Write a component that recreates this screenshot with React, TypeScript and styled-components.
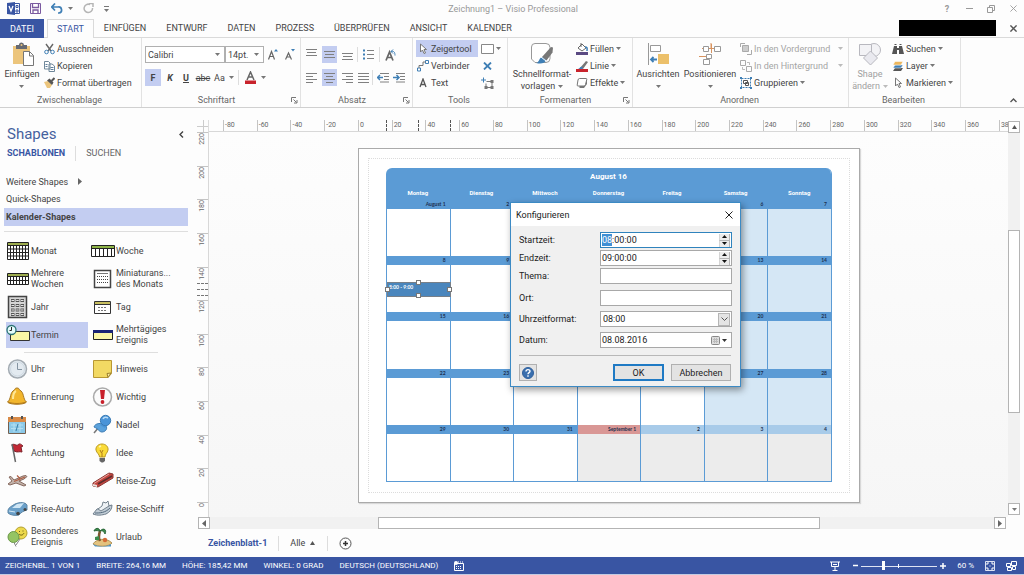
import React, { useEffect, useRef } from "react";
import styled, { createGlobalStyle, css } from "styled-components";

const font = `Roboto, "Open Sans", "Liberation Sans", sans-serif`;
const smallFont = `Lato, "Open Sans", sans-serif`;
const ink = "#444444";
const brand = "#3955a3";
const soft = "#c3cdf1";
const steel = "#3f7fb5";
const calBlue = "#5b9bd5";

const GlobalStyle = createGlobalStyle`
  * { box-sizing: border-box; }
  body { margin: 0; background: #fdfdfd; }
  html, body, #root { height: 100%; }
  button, input, select { font: inherit; color: inherit; margin: 0; }
  svg { display: block; flex: none; }
`;

const Shell = styled.div`
  display: flex;
  flex-direction: column;
  min-height: 100%;
  font-family: ${font};
  font-size: 9px;
  line-height: 12px;
  color: ${ink};
  background: #fdfdfd;
`;

const plainButton = css`
  display: flex;
  align-items: center;
  border: 0;
  padding: 0;
  background: none;
  white-space: nowrap;
`;

/* ---------- title bar ---------- */
const TitleBar = styled.header`
  display: grid;
  grid-template-columns: 1fr auto 1fr;
  align-items: center;
  height: 19px;
  padding: 0 5px 2px 7px;
`;
const QuickAccess = styled.div`
  display: flex;
  align-items: center;
  gap: 10px;
`;
const QuickButton = styled.button`
  ${plainButton}
  gap: 5px;
`;
const WindowTitle = styled.h1`
  margin: 0;
  font-size: 9px;
  font-weight: 400;
  color: #999999;
`;
const WindowControls = styled.div`
  display: flex;
  justify-content: flex-end;
  align-items: center;
  gap: 10px;
  color: #999999;
`;
const WindowButton = styled.button`
  ${plainButton}
  justify-content: center;
  width: 12px;
  height: 12px;
  font-weight: 700;
`;

/* ---------- tabs ---------- */
const TabBar = styled.nav`
  display: flex;
  align-items: stretch;
  height: 19px;
  border-bottom: 1px solid #dadada;
`;
const FileTab = styled.button`
  ${plainButton}
  justify-content: center;
  width: 44px;
  background: ${brand};
  color: #ffffff;
  margin: 0 3px -1px 0;
`;
const Tab = styled.button<{ $active?: boolean }>`
  ${plainButton}
  padding: 0 10px;
  ${(p) =>
    p.$active &&
    css`
      padding: 0 9px;
      color: ${brand};
      background: #fdfdfd;
      border: 1px solid #dadada;
      border-bottom: 0;
      margin-bottom: -1px;
    `}
`;
const AccountBar = styled.div`
  display: flex;
  align-items: center;
  gap: 11px;
  margin-left: auto;
  padding-right: 5px;
`;
const AccountName = styled.div`
  width: 97px;
  height: 16px;
  background: #000000;
`;

/* ---------- ribbon ---------- */
const Ribbon = styled.section`
  display: flex;
  height: 70px;
  border-bottom: 1px solid #d0d0d0;
`;
const Group = styled.div<{ $w: number }>`
  display: flex;
  flex-direction: column;
  flex: none;
  width: ${(p) => p.$w}px;
  padding-top: 2px;
  border-right: 1px solid #e2e2e2;
`;
const GroupBody = styled.div<{ $pad?: number; $gap?: number }>`
  display: flex;
  flex: 1;
  gap: ${(p) => p.$gap ?? 4}px;
  padding-left: ${(p) => p.$pad ?? 4}px;
`;
const GroupFooter = styled.div`
  display: flex;
  align-items: center;
  height: 14px;
  padding-right: 2px;
  color: #666666;
`;
const Launcher = styled.button`
  ${plainButton}
`;
const FooterText = styled.span`
  flex: 1;
  text-align: center;
`;
const BigButton = styled.button<{ $w: number; $muted?: boolean }>`
  ${plainButton}
  flex-direction: column;
  width: ${(p) => p.$w}px;
  padding-top: 2px;
  color: ${(p) => (p.$muted ? "#a0a0a0" : ink)};
`;
const BigLabel = styled.span`
  display: flex;
  flex-direction: column;
  align-items: center;
  padding-top: 2px;
`;
const LabelLine = styled.span`
  display: flex;
  align-items: center;
  justify-content: center;
  gap: 3px;
  height: 12px;
`;
const Stack = styled.div`
  display: flex;
  flex-direction: column;
  align-items: flex-start;
`;
const Tool = styled.button<{ $muted?: boolean; $on?: boolean; $w?: number }>`
  ${plainButton}
  gap: 2px;
  height: 17px;
  padding-left: 1px;
  width: ${(p) => (p.$w ? `${p.$w}px` : "auto")};
  color: ${(p) => (p.$muted ? "#a5a5a5" : ink)};
  background: ${(p) => (p.$on ? soft : "none")};
`;
const ToolArrow = styled.span`
  display: flex;
  margin-left: auto;
`;
const Rows = styled.div`
  display: flex;
  flex-direction: column;
  gap: 6px;
  padding-top: 6px;
`;
const Row = styled.div`
  display: flex;
  align-items: center;
  height: 17px;
  gap: 3px;
`;
const Glyph = styled.button<{ $on?: boolean; $w?: number }>`
  ${plainButton}
  justify-content: center;
  gap: 4px;
  width: ${(p) => p.$w ?? 15}px;
  height: 17px;
  background: ${(p) => (p.$on ? soft : "none")};
`;
const Rule = styled.span`
  width: 1px;
  height: 15px;
  background: #dddddd;
`;
const Picker = styled.label<{ $w: number }>`
  position: relative;
  display: block;
  width: ${(p) => p.$w}px;
  height: 17px;
  margin-right: -3px;
  & > svg {
    position: absolute;
    right: 5px;
    top: 7px;
    pointer-events: none;
  }
`;
const PickerField = styled.select`
  appearance: none;
  width: 100%;
  height: 100%;
  padding: 0 2px;
  border: 1px solid #b0b0b0;
  border-radius: 0;
  background: #ffffff;
`;
const RibbonEnd = styled.div`
  display: flex;
  flex: 1;
  align-items: flex-end;
  justify-content: flex-end;
  padding: 0 7px 4px 0;
`;

/* ---------- shapes panel ---------- */
const Main = styled.div`
  display: flex;
  flex: 1;
  min-height: 0;
`;
const Sidebar = styled.aside`
  flex: none;
  width: 197px;
  padding: 15px 9px 0 4px;
`;
const SidebarHead = styled.div`
  display: flex;
  justify-content: space-between;
  align-items: center;
  height: 22px;
  padding: 0 4px 0 3px;
`;
const SidebarTitle = styled.h2`
  margin: 0;
  font-size: 15px;
  line-height: 20px;
  font-weight: 400;
  color: #45619d;
`;
const SidebarTabs = styled.div`
  display: flex;
  align-items: center;
  height: 16px;
  padding-left: 3px;
  gap: 10px;
`;
const SidebarTab = styled.button<{ $on?: boolean }>`
  ${plainButton}
  font-weight: ${(p) => (p.$on ? 700 : 400)};
  color: ${(p) => (p.$on ? brand : "#666666")};
`;
const Stencils = styled.div`
  display: flex;
  flex-direction: column;
  padding-top: 12px;
`;
const Stencil = styled.button<{ $on?: boolean }>`
  ${plainButton}
  gap: 10px;
  height: ${(p) => (p.$on ? 18 : 17)}px;
  margin-top: ${(p) => (p.$on ? 1 : 0)}px;
  padding-left: 2px;
  font-weight: ${(p) => (p.$on ? 700 : 400)};
  background: ${(p) => (p.$on ? soft : "none")};
`;
const Divider = styled.hr<{ $inset?: boolean }>`
  width: ${(p) => (p.$inset ? "134px" : "100%")};
  height: 1px;
  margin: ${(p) => (p.$inset ? "3px 0 2px 20px" : "5px 0")};
  border: 0;
  background: #dedede;
`;
const ShapeGrid = styled.div`
  display: grid;
  grid-template-columns: 85px 90px;
  grid-auto-rows: 28px;
  padding-left: 2px;
`;
const ShapeItem = styled.button<{ $on?: boolean }>`
  ${plainButton}
  gap: 1px;
  margin: 1px 3px 1px 0;
  line-height: 11px;
  text-align: left;
  white-space: pre-line;
  background: ${(p) => (p.$on ? soft : "none")};
`;

/* ---------- drawing area ---------- */
const Workspace = styled.main`
  display: grid;
  flex: 1;
  min-width: 0;
  grid-template-columns: 12px 1fr 12px;
  grid-template-rows: 12px 1fr 12px 28px;
  padding: 12px 4px 0 0;
`;
const Corner = styled.div`
  background:
    linear-gradient(#cccccc, #cccccc) 6px 0 / 1px 12px no-repeat,
    linear-gradient(#cccccc, #cccccc) 0 6px / 12px 1px no-repeat;
  border-right: 1px solid #dddddd;
`;
const HRuler = styled.div`
  position: relative;
  display: flex;
  min-width: 0;
  overflow: hidden;
  padding-left: 14px;
  border-bottom: 1px solid #d8d8d8;
  color: #666666;
  font-size: 7px;
  line-height: 10px;
`;
const HTick = styled.span<{ $last?: boolean }>`
  flex: ${(p) => (p.$last ? "0 0 9px" : "1 1 0")};
  padding-left: 1px;
  border-left: 1px solid #c4c4c4;
  min-width: 0;
  white-space: nowrap;
`;
const VRuler = styled.div`
  position: relative;
  display: flex;
  flex-direction: column;
  border-right: 1px solid #d8d8d8;
  color: #666666;
  font-size: 7px;
  line-height: 10px;
`;
const VTick = styled.span<{ $last?: boolean }>`
  flex: ${(p) => (p.$last ? "0 0 15px" : "1 1 0")};
  display: flex;
  align-items: flex-start;
  border-top: 1px solid #c4c4c4;
`;
const VTickLabel = styled.span`
  writing-mode: vertical-rl;
  transform: rotate(180deg);
`;
const HMark = styled.i<{ $at: number }>`
  position: absolute;
  top: 0;
  bottom: 0;
  left: ${(p) => p.$at}px;
  border-left: 1px dashed #555555;
`;
const VMark = styled.i<{ $at: number }>`
  position: absolute;
  left: 0;
  right: 0;
  top: ${(p) => p.$at}px;
  border-top: 1px dashed #777777;
`;
const Canvas = styled.div`
  position: relative;
  overflow: hidden;
  background: linear-gradient(#fdfdfd, #f6f6f6);
`;
const Page = styled.div`
  position: absolute;
  left: 149px;
  top: 16px;
  width: 502px;
  height: 355px;
  padding: 9px;
  background: #ffffff;
  border: 1px solid #aaaaaa;
  box-shadow: 1px 1px 1px #d8d8d8;
`;
const Margins = styled.div`
  height: 100%;
  padding: 9px 17px;
  border: 1px dotted #dcdcdc;
`;
const Calendar = styled.div`
  position: relative;
`;
const CalendarTable = styled.table`
  width: 100%;
  height: 314px;
  table-layout: fixed;
  border-collapse: separate;
  border-spacing: 0;
  border-right: 1px solid ${calBlue};
  border-bottom: 1px solid ${calBlue};
  border-radius: 6px 6px 0 0;
  overflow: hidden;
  color: #ffffff;
`;
const MonthCell = styled.th`
  height: 18px;
  padding: 0;
  background: ${calBlue};
  font-size: 8px;
  line-height: 18px;
`;
const WeekdayCell = styled.th`
  height: 14px;
  padding: 0;
  background: ${calBlue};
  font-size: 6px;
  line-height: 14px;
`;
const DayCell = styled.td<{ $fill: string }>`
  padding: 0;
  vertical-align: top;
  border-left: 1px solid ${calBlue};
  background: ${(p) => p.$fill};
`;
const DayBand = styled.div<{ $fill: string }>`
  height: 9px;
  padding-right: 4px;
  background: ${(p) => p.$fill};
  color: #1c3050;
  font-family: ${smallFont};
  font-size: 5px;
  line-height: 8px;
  font-weight: 700;
  text-align: right;
`;
const Appointment = styled.div`
  position: absolute;
  left: 1px;
  top: 114px;
  width: 64px;
  height: 15px;
  padding-left: 1px;
  background: #4a86bd;
  border: 1px solid #777f88;
  color: #ffffff;
  font-family: ${smallFont};
  font-size: 5px;
  line-height: 8px;
  font-weight: 700;
`;
const Handle = styled.i<{ $x: string; $y: string }>`
  position: absolute;
  left: ${(p) => p.$x};
  top: ${(p) => p.$y};
  width: 5px;
  height: 5px;
  margin: -3px 0 0 -3px;
  background: #ffffff;
  border: 1px solid #777777;
`;

/* ---------- scrollbars ---------- */
const VScroll = styled.div`
  grid-column: 3;
  grid-row: 1 / span 2;
  display: flex;
  flex-direction: column;
  padding: 1px 0 2px;
`;
const HScroll = styled.div`
  grid-column: 1 / span 2;
  display: flex;
  padding: 0 2px 0 1px;
`;
const ScrollButton = styled.button`
  ${plainButton}
  justify-content: center;
  flex: none;
  width: 12px;
  height: 12px;
  background: #ffffff;
  border: 1px solid #b4b4b4;
`;
const ScrollGap = styled.div<{ $grow: number }>`
  flex: ${(p) => p.$grow} 1 0;
  background: #f1f1f1;
`;
const ScrollThumb = styled.div<{ $grow: number }>`
  flex: ${(p) => p.$grow} 1 0;
  background: #ffffff;
  border: 1px solid #b4b4b4;
`;
const SheetTabs = styled.div`
  grid-column: 1 / span 3;
  display: flex;
  align-items: center;
  gap: 11px;
  padding-left: 11px;
`;
const SheetTab = styled.button<{ $on?: boolean }>`
  ${plainButton}
  gap: 4px;
  font-weight: ${(p) => (p.$on ? 700 : 400)};
  color: ${(p) => (p.$on ? brand : ink)};
`;

/* ---------- dialog ---------- */
const Dialog = styled.form`
  position: absolute;
  left: 301px;
  top: 70px;
  width: 231px;
  background: #f0f0f0;
  border: 1px solid #3c8ac4;
  box-shadow: 2px 3px 7px rgba(0, 0, 0, 0.4);
  color: #222222;
`;
const DialogHead = styled.div`
  display: flex;
  align-items: center;
  justify-content: space-between;
  height: 23px;
  padding: 0 7px 0 5px;
  background: #ffffff;
`;
const DialogTitle = styled.h3`
  margin: 0;
  font-size: 9px;
  font-weight: 400;
`;
const CloseButton = styled.button`
  ${plainButton}
`;
const Fields = styled.div<{ $gap: number }>`
  display: flex;
  flex-direction: column;
  gap: ${(p) => p.$gap}px;
  padding: 6px 8px 0;
`;
const Field = styled.div`
  display: grid;
  grid-template-columns: 81px minmax(0, 1fr);
  align-items: center;
  height: 16px;
`;
const Control = styled.div<{ $focus?: boolean }>`
  display: flex;
  align-items: center;
  height: 16px;
  padding-right: 1px;
  background: #ffffff;
  border: 1px solid ${(p) => (p.$focus ? "#2f83bd" : "#a8a8a8")};
`;
const Entry = styled.input`
  flex: 1;
  min-width: 0;
  height: 12px;
  padding: 0 1px;
  border: 0;
  outline: 0;
  background: none;
  &::selection {
    background: #3f8fd4;
    color: #ffffff;
  }
`;
const Choice = styled.select`
  appearance: none;
  flex: 1;
  min-width: 0;
  height: 14px;
  padding: 0 2px;
  border: 0;
  background: none;
`;
const Spinner = styled.div`
  display: flex;
  flex-direction: column;
  width: 11px;
`;
const SpinButton = styled.button`
  ${plainButton}
  justify-content: center;
  height: 6px;
  background: #ececec;
  border-right: 1px solid #b5b5b5;
  border-left: 1px solid #d5d5d5;
  & + & {
    height: 7px;
    border-top: 1px solid #b5b5b5;
  }
`;
const DropMark = styled.span`
  display: flex;
  align-items: center;
  justify-content: center;
  width: 12px;
  height: 13px;
  background: #e4e4e4;
  border: 1px solid #b5b5b5;
`;
const DateButton = styled.button`
  ${plainButton}
  gap: 2px;
  padding-right: 3px;
`;
const DialogFooter = styled.div`
  display: flex;
  align-items: center;
  gap: 7px;
  margin: 7px 9px 0 8px;
  padding: 8px 0 5px;
  border-top: 1px solid #b8b8b8;
`;
const PushButton = styled.button<{ $w: number; $default?: boolean; $first?: boolean }>`
  ${plainButton}
  justify-content: center;
  width: ${(p) => p.$w}px;
  height: 17px;
  margin-right: ${(p) => (p.$first ? "auto" : "0")};
  background: #e3e3e3;
  border: ${(p) => (p.$default ? "2px solid #1f7ac4" : "1px solid #b0b0b0")};
`;

/* ---------- status bar ---------- */
const StatusBar = styled.footer`
  display: flex;
  align-items: center;
  gap: 16px;
  height: 18px;
  padding: 0 7px 0 5px;
  background: ${brand};
  border-bottom: 1px solid #c3cbe2;
  color: #ffffff;
  font-size: 8px;
  white-space: nowrap;
`;
const StatusTools = styled.div`
  display: flex;
  align-items: center;
  gap: 11px;
  margin-left: auto;
`;
const Zoom = styled.div`
  display: flex;
  align-items: center;
  gap: 3px;
  padding-left: 2px;
`;
const StatusButton = styled.button`
  ${plainButton}
`;
const ZoomSlider = styled.input`
  appearance: none;
  width: 76px;
  height: 10px;
  background:
    linear-gradient(#ffffff, #ffffff) 37px 3px / 1px 4px no-repeat,
    linear-gradient(#dfe4f3, #dfe4f3) 0 5px / 100% 1px no-repeat;
  &::-webkit-slider-thumb {
    appearance: none;
    width: 3px;
    height: 9px;
    background: #ffffff;
  }
`;

/* ---------- small drawings ---------- */
const Down = ({ c = "#777777" }: { c?: string }) => (
  <svg width="5" height="3" viewBox="0 0 5 3"><path d="M0 0h5L2.500 3z" fill={c} /></svg>
);
const Up = ({ c = "#555555", w = 5 }: { c?: string; w?: number }) => (
  <svg width={w} height="4" viewBox="0 0 5 4"><path d="M0 4h5L2.500 0z" fill={c} /></svg>
);
const Side = ({ left }: { left?: boolean }) => (
  <svg width="4" height="7" viewBox="0 0 4 7"><path d={left ? "M4 0v7L0 3.500z" : "M0 0v7l4-3.500z"} fill="#666" /></svg>
);
const Cross = ({ s = 8, c = "#444", w = 1 }: { s?: number; c?: string; w?: number }) => (
  <svg width={s} height={s} viewBox="0 0 8 8"><path d="M.5.5l7 7M7.500.5l-7 7" stroke={c} strokeWidth={w} fill="none" /></svg>
);
const Svg = ({ w, h, children }: { w: number; h: number; children: React.ReactNode }) => (
  <svg width={w} height={h} viewBox={`0 0 ${w} ${h}`} fill="none">{children}</svg>
);

const LinesIcon = ({ rows }: { rows: [number, number, number][] }) => (
  <Svg w={11} h={11}>
    {rows.map(([x, y, l], i) => <path key={i} d={`M${x} ${y + 0.5}h${l}`} stroke="#808080" />)}
  </Svg>
);
const IndentIcon = ({ out }: { out?: boolean }) => (
  <Svg w={13} h={11}>
    <path d="M3 1.500h9M7 4.500h5M7 7.500h5M3 10h9" stroke="#808080" />
    <path d={out ? "M6 5.500H1M3 3L.5 5.500 3 8" : "M0 5.500h5M3.500 3L6 5.500 3.500 8"} stroke={steel} strokeWidth="1.500" />
  </Svg>
);

const PasteIcon = () => (
  <Svg w={24} h={24}>
    <path d="M3 4h17v18H3z" fill="#ecc57c" />
    <path d="M6 3h3a2.500 2.500 0 0 1 5 0h3v4H6z" fill="#666a72" />
    <circle cx="11.500" cy="3" r="1" fill="#ecc57c" />
    <path d="M13.500 9.500h6l4 4v10h-10z" fill="#fff" stroke="#777" />
    <path d="M19.500 9.500V14h4" stroke="#777" />
  </Svg>
);
const CutIcon = () => (
  <Svg w={11} h={12}>
    <path d="M2 1l5 7M9 1L4 8" stroke="#666" strokeWidth="1.400" />
    <circle cx="2.500" cy="9" r="1.800" stroke={steel} /><circle cx="8.500" cy="9" r="1.800" stroke={steel} />
  </Svg>
);
const CopyIcon = () => (
  <Svg w={11} h={12}>
    <path d="M.5 1.500h4l1.500 1.500v6H.5zM5 4h3l2.500 2v5.500H5z" fill="#fff" stroke="#6f8799" />
    <path d="M1.500 4.500h2M1.500 6.500h2M6.500 7.500h3M6.500 9.500h3" stroke="#5e7f9c" />
  </Svg>
);
const BrushIcon = () => (
  <Svg w={11} h={12}>
    <path d="M0 5l4-1 4 4-2 3H3z" fill="#ecc57c" /><path d="M3 3.500l5 4.500 1.500-2.500-4-4z" fill="#555" /><path d="M7.500 4l3-3" stroke="#555" strokeWidth="2" />
  </Svg>
);
const PointerIcon = ({ s = 12 }: { s?: number }) => (
  <Svg w={s} h={12}><path d="M3.500 1v8l2-2 1.500 3.500 1.500-.5L7 6.500h2.500z" fill="#fff" stroke="#777" /></Svg>
);
const ConnectorIcon = () => (
  <Svg w={12} h={12}>
    <path d="M8.500.5h3v3h-3z" stroke={steel} /><path d="M.5 8h3v3h-3z" stroke={steel} /><path d="M2 8V5.500h4V2h2.500" stroke="#777" />
  </Svg>
);
const CropIcon = () => (
  <Svg w={13} h={12}>
    <path d="M5.500 4.500H11v6H5v-4" stroke="#777" /><path d="M0 3h5M2.500.5v5" stroke={steel} />
    <path d="M9.500 3h3v3h-3zM9.500 9h3v3h-3zM3.500 9h3v3h-3z" fill="#777" />
  </Svg>
);
const QuickStyleIcon = () => (
  <Svg w={24} h={24}>
    <path d="M5 1.500h11a4 4 0 0 1 4 4v11a4 4 0 0 1-4 4H5L1.500 17V5A3.500 3.500 0 0 1 5 1.500z" fill="#fff" stroke="#999" />
    <path d="M12 15l9-10 2 .5-.5 5-6 8z" fill="#777" />
    <path d="M6 21c3 0 3-5 6-6l4 3c-1 4-6 4-10 3z" fill={steel} />
    <path d="M11 15l5 4" stroke="#fff" />
  </Svg>
);
const FillIcon = () => (
  <Svg w={12} h={12}><path d="M2 5l4-4 4 4-4 3z" fill="#fff" stroke="#666" /><path d="M5 4V0" stroke="#666" /><path d="M9 4c3 0 2 2 2 4" stroke={steel} strokeWidth="1.500" /><path d="M0 9h12v3H0z" fill="#5a4a82" /></Svg>
);
const LineIcon = () => (
  <Svg w={12} h={12}><path d="M4 8l6-7 2 1-5 7z" fill="#777" /><path d="M2 9c2 0 2-3 4-2l1 1c-1 2-3 2-5 1z" fill={steel} /><path d="M0 9h12v3H0z" fill="#c8232c" /></Svg>
);
const EffectIcon = () => (
  <Svg w={12} h={12}><path d="M3 10l8-8v5l-3 4H4z" fill="#777" /><path d="M3.500 1.500H10q1 0 .8 1L9.500 7.500Q9 9 8 9H2Q1 9 1.200 8L2 3Q2.300 1.500 3.500 1.500z" fill="#fff" stroke="#777" /></Svg>
);
const AlignIcon = () => (
  <Svg w={24} h={24}>
    <path d="M2.500 1v22" stroke="#999" /><path d="M4.500 3.500h10v6h-10z" fill="#fff" stroke="#999" /><path d="M12 12h11v10H12z" fill="#ecc06a" />
    <path d="M11 17.500H5M7.500 15L5 17.500 7.500 20" stroke={steel} strokeWidth="1.800" />
  </Svg>
);
const PositionIcon = () => (
  <Svg w={24} h={24}>
    <path d="M4 6.500h13M13 1v5M1 14.500h10M8.500 14v4M13.500 2v9" stroke="#d8935f" />
    <path d="M5.500 4.500h5v5h-5zM16.500 4.500h6v5h-6zM8.500 12.500h5v4h-5zM5.500 17.500h6v5h-6z" fill="#fff" stroke="#999" />
  </Svg>
);
const FrontIcon = () => (
  <Svg w={12} h={12}><path d="M.5 4V.5H5M7 11.500h4.500V7" stroke="#aaa" /><path d="M2.500 2.500h6v6h-6z" fill="#ccc" stroke="#aaa" /></Svg>
);
const BackIcon = () => (
  <Svg w={12} h={12}><path d="M.5.5h5v5h-5zM6.500 6.500h5v5h-5z" stroke="#aaa" /><path d="M7 2.500h2.500V5M2.500 7v2.500H5" stroke="#bbb" /></Svg>
);
const GroupIcon = () => (
  <Svg w={12} h={12}>
    <path d="M1.500 1.500h9v9h-9z" stroke={steel} strokeDasharray="2 1" /><path d="M3.500 3.500h4v3h-4zM5.500 5.500h3v3h-3z" fill="#fff" stroke="#555" />
    <path d="M0 0h2v2H0zM10 0h2v2h-2zM0 10h2v2H0zM10 10h2v2h-2z" fill={steel} />
  </Svg>
);
const ChangeShapeIcon = () => (
  <Svg w={24} h={24}>
    <circle cx="16" cy="8" r="6.500" fill="#f3f3f6" stroke="#b8b8bf" /><path d="M1.500 2.500h12v11h-12z" fill="#f3f3f6" stroke="#b8b8bf" /><path d="M12.500 9l7 7-7 7-7-7z" fill="#e9e9ef" stroke="#b8b8bf" />
  </Svg>
);
const FindIcon = () => (
  <Svg w={12} h={12}><path d="M2 3h3v2h2V3h3l2 8H7V7H5v4H0z" fill="#555" /><path d="M2.500 1.500h2M7.500 1.500h2" stroke="#555" /></Svg>
);
const LayerIcon = () => (
  <Svg w={12} h={12}><path d="M3 8h8l-2 3H1z" fill="#555" /><path d="M3 5h8L9 8H1z" fill={steel} stroke="#fff" strokeWidth=".5" /><path d="M3 1.500h8L9 5H1z" fill="#ecb65c" stroke="#fff" strokeWidth=".5" /></Svg>
);
const LauncherIcon = () => (
  <Svg w={7} h={7}><path d="M.5 5V.5H5M2.500 2.500l3 3M6 3v3H3" stroke="#777" /></Svg>
);

/* ---------- stencil drawings, all on a 24 x 24 field ---------- */
const shapeArt: Record<string, React.ReactNode> = {
  month: <><path d="M1.500 3.500h21v17h-21z" fill="#fff" stroke="#222" /><path d="M2 4h20v2H2z" fill="#9dac4e" /><path d="M1 6.500h22M1 10h22M1 13.500h22M1 17h22M4.500 7v13M7.500 7v13M10.500 7v13M13.500 7v13M16.500 7v13M19.500 7v13" stroke="#222" /></>,
  week: <><path d="M.5 6.500h23v11H.5z" fill="#fff" stroke="#222" /><path d="M1 7h22v2H1z" fill="#8fb548" /><path d="M1 9.500h22M4.500 9v8M8.500 9v8M12.500 9v8M16.500 9v8M20.500 9v8" stroke="#222" /></>,
  weeks: <><path d="M1.500 6.500h21v11h-21z" fill="#fff" stroke="#222" /><path d="M2 7h20v2H2z" fill="#9dac4e" /><path d="M1 9.500h22M1 13.500h22M4.500 9v8M7.500 9v8M10.500 9v8M13.500 9v8M16.500 9v8M19.500 9v8" stroke="#222" /></>,
  mini: <><path d="M3.500 3.500h16v17h-16z" fill="#fff" stroke="#444" strokeWidth="1.500" /><path d="M6 6.500h11" stroke="#777" /><path d="M6 9.500h11M6 12.500h11M6 15.500h11" stroke="#444" strokeDasharray="1 1" /></>,
  year: <><path d="M2.500 1.500h18v21h-18z" fill="#d5d5d5" stroke="#444" strokeWidth="1.500" /><path d="M5 5.500h13M5 10.500h13M5 15h13M5 19.500h13" stroke="#555" strokeWidth="3" strokeDasharray="3.500 1.250" /><path d="M5.500 5.500h13M5.500 10.500h13M5.500 15h13M5.500 19.500h13" stroke="#e4e4e4" strokeDasharray="2.500 2.250" /></>,
  day: <><path d="M3.500 6.500h16v12h-16z" fill="#fff" stroke="#333" /><path d="M4 7h15v2H4z" fill="#c9c060" /><path d="M3 9.500h17" stroke="#333" /><path d="M7 12.500h9M7 15.500h9" stroke="#777" strokeDasharray="2 1" /></>,
  appt: <><path d="M4.500 8.500h19v9h-19z" fill="#fbf6a6" stroke="#333" /><circle cx="5.500" cy="7" r="4.500" fill="#e4fbfb" stroke="#2b7474" strokeWidth="1.300" /><path d="M5.500 4v3.500H3.500" stroke="#222" /></>,
  multi: <><path d="M2.500 7.500h19v9h-19z" fill="#fbf6a6" stroke="#222" /><path d="M2 7h20v3H2z" fill="#1b2475" /></>,
  clock: <><circle cx="11.500" cy="12" r="9" fill="#e3eaf0" stroke="#a3abb2" strokeWidth="1.500" /><circle cx="11.500" cy="12" r="7" stroke="#cfdae3" /><path d="M11.500 6v6.500H16" stroke="#8494a2" /></>,
  note: <><path d="M2.500 3.500h18v13l-3.500 4H2.500z" fill="#f2d963" stroke="#b89834" /><path d="M20 16l-4 .5 1 4z" fill="#fff0a0" stroke="#9c8030" /></>,
  bell: <><path d="M11 3c2 0 2 1 2.500 2 5 2 3 9 7 12-2 3-17 3-19 0 4-3 2-10 7-12C9 4 9 3 11 3z" fill="#f2b62d" stroke="#a87822" /><path d="M7 14c0-4 1-7 3-8" stroke="#ffe795" strokeWidth="2" /><path d="M2 17c5 2 13 2 18 0" stroke="#b47c1c" /></>,
  important: <><circle cx="11.500" cy="12" r="9" fill="#fbfbfb" stroke="#aaa" strokeWidth="1.500" /><path d="M9 5h5l-1 9h-3z" fill="#c8202b" /><circle cx="11.500" cy="17" r="1.900" fill="#c8202b" /></>,
  meeting: <><path d="M2.500 4.500h17v16h-17z" fill="#8cc9e8" stroke="#75604f" /><path d="M2 4h18v5H2z" fill="#d98b48" /><path d="M6 3v3M16 3v3" stroke="#555" strokeWidth="2" /><path d="M5 12h12M5 15.500h12M8 10v9M14 10v9" stroke="#b4dff2" /><path d="M12 11l-2 7" stroke="#3a7fa8" /></>,
  pin: <><path d="M8 14l-5 6" stroke="#777" strokeWidth="1.500" /><path d="M3 14c1-4 8-5 12-1 2 3-1 6-4 6-3 0-3-3-8-5z" fill="#5ba2dc" stroke="#3c7cb4" /><path d="M9 12l3-4 5 3-3 4z" fill="#4a94d8" /><circle cx="14.500" cy="7.500" r="5.200" fill="#4a94d8" stroke="#3c7cb4" /><path d="M12 6c1-2 3-2 5-1" stroke="#b9dcf6" strokeWidth="1.500" /></>,
  flag: <><path d="M6 4c2-2 4 1 6 0 1-2 3-1 5 1l-2 1 1 5c-3-1-4 1-8-1z" fill="#c22835" stroke="#7c2028" /><path d="M6 3l3.500 18" stroke="#666" strokeWidth="1.500" /></>,
  idea: <><path d="M11 3c4 0 6.500 3 6 6-.5 3-3 4-3 7H8.500c0-3-3-4-3.500-7-.5-3 2-6 6-6z" fill="#fadb39" stroke="#b99822" /><path d="M8.500 17h5.500v3l-2 1.500h-1.500l-2-1.500z" fill="#666" /><path d="M9 9l1.500 3 1.500-3M11 12v4" stroke="#b17b1c" /><path d="M8 6l2-1" stroke="#fff6b4" strokeWidth="1.500" /></>,
  plane: <><path d="M3 8l2-.5 3 3.500 9-4 3-.5 1 1-3 2.500-5 2 7 4-2 1-8-3-6 2-2-1 4-3z" fill="#c2b2aa" stroke="#86695e" /><path d="M8 12.500L19 8M11 6.500l3 3" stroke="#b05f44" strokeWidth="1.200" /></>,
  train: <><path d="M2 14L18 4l4 1v4L7 18l-5-1z" fill="#c4443e" stroke="#8a3a36" /><path d="M3 14.500l15-9.500" stroke="#e9a59d" /><path d="M7 15l14-8" stroke="#5a2f2e" strokeWidth="1.500" /><path d="M2 15l4 1v2l-4-1z" fill="#e8e2dd" /></>,
  car: <><path d="M2 13c1-3 4-4 7-6 5-2 10-2 12 1v5c-3 1-6 2-8 5-4 1-9 0-11-2z" fill="#6ba0c9" stroke="#5f87a6" /><path d="M6 11l5-4 7-1-4 5z" fill="#cfe6f5" /><path d="M3 14l6 1" stroke="#d6e9f5" /><circle cx="12" cy="16.500" r="1.800" fill="#444" /><circle cx="19" cy="12.500" r="1.500" fill="#444" /></>,
  ship: <><path d="M2 17L6 12l15-4c0 4-2 7-6 9-4 1-8 2-13 0z" fill="#c2cdd6" stroke="#6e7d8b" /><path d="M7 12l4-3 1-4 3 1 2-2 1 5-8 5z" fill="#eef2f5" stroke="#76848f" /><path d="M4 16c5 0 10 0 15-5" stroke="#51677a" /></>,
  special: <><circle cx="15" cy="8" r="6" fill="#edd94c" stroke="#b3a030" /><circle cx="7.500" cy="12" r="5.500" fill="#94c463" stroke="#6a9847" /><path d="M8 17.500l2 4M14 14l-4 6" stroke="#888" /><path d="M13 9c2 2 4 1 5-1M13.500 6v1M17 5.500v1" stroke="#6b5e12" /></>,
  holiday: <><path d="M2 19c3-5 13-7 19-1-3 4-15 4-19 1z" fill="#e3c27e" stroke="#b0935a" /><path d="M2 19c5 3 14 3 18 0v2.500H4z" fill="#4e93c0" /><path d="M9 16c-2-4-1-7 0-10" stroke="#7d5830" strokeWidth="2.500" /><path d="M9 6C8 2 4 3 3 6c3-1 4 0 6 0 3-1 4 1 5 3 2-4-1-7-5-3z" fill="#3c8c4c" stroke="#2a6437" /><path d="M4 12l4-1v4H4z" fill="#3c8c4c" /><circle cx="14" cy="15" r="2.200" fill="#d46a36" /></>,
};

const topShapes: [string, string][] = [
  ["month", "Monat"], ["week", "Woche"], ["weeks", "Mehrere\nWochen"], ["mini", "Miniaturans...\ndes Monats"],
  ["year", "Jahr"], ["day", "Tag"], ["appt", "Termin"], ["multi", "Mehrtägiges\nEreignis"],
];
const moreShapes: [string, string][] = [
  ["clock", "Uhr"], ["note", "Hinweis"], ["bell", "Erinnerung"], ["important", "Wichtig"],
  ["meeting", "Besprechung"], ["pin", "Nadel"], ["flag", "Achtung"], ["idea", "Idee"],
  ["plane", "Reise-Luft"], ["train", "Reise-Zug"], ["car", "Reise-Auto"], ["ship", "Reise-Schiff"],
  ["special", "Besonderes\nEreignis"], ["holiday", "Urlaub"],
];

const ShapeList = ({ items }: { items: [string, string][] }) => (
  <ShapeGrid>
    {items.map(([id, name]) => (
      <ShapeItem key={id} type="button" $on={id === "appt"}>
        <Svg w={24} h={24}>{shapeArt[id]}</Svg>
        <span>{name}</span>
      </ShapeItem>
    ))}
  </ShapeGrid>
);

const RibbonGroup = ({ w, title, launcher, pad, gap, children }: {
  w: number; title: string; launcher?: boolean; pad?: number; gap?: number; children: React.ReactNode;
}) => (
  <Group $w={w}>
    <GroupBody $pad={pad} $gap={gap}>{children}</GroupBody>
    <GroupFooter>
      <FooterText>{title}</FooterText>
      {launcher && <Launcher type="button" aria-label={title}><LauncherIcon /></Launcher>}
    </GroupFooter>
  </Group>
);

const menus = ["EINFÜGEN", "ENTWURF", "DATEN", "PROZESS", "ÜBERPRÜFEN", "ANSICHT", "KALENDER"];
const weekdays = ["Montag", "Dienstag", "Mittwoch", "Donnerstag", "Freitag", "Samstag", "Sonntag"];
const hTicks = Array.from({ length: 24 }, (_, i) => -80 + i * 20);
const vTicks = Array.from({ length: 12 }, (_, i) => 220 - i * 20);

const dayLabel = (n: number) => (n === 1 ? "August 1" : n <= 31 ? String(n) : n === 32 ? "September 1" : String(n - 31));
const bandFill = (n: number) => (n <= 31 ? calBlue : n === 32 ? "#d99795" : "#a8cbe9");
const dayFill = (n: number, col: number) => (n > 31 ? "#ececec" : col > 4 ? "#d5e7f5" : "#ffffff");

const Spin = () => (
  <Spinner>
    <SpinButton type="button" aria-label="Mehr"><svg width="5" height="3" viewBox="0 0 5 3"><path d="M0 3h5L2.500 0z" fill="#111" /></svg></SpinButton>
    <SpinButton type="button" aria-label="Weniger"><Down c="#111" /></SpinButton>
  </Spinner>
);

function ConfigureDialog() {
  const start = useRef<HTMLInputElement>(null);
  useEffect(() => {
    start.current?.focus();
    start.current?.setSelectionRange(0, 2);
  }, []);
  return (
    <Dialog role="dialog" aria-labelledby="dlg-title" onSubmit={(e) => e.preventDefault()}>
      <DialogHead>
        <DialogTitle id="dlg-title">Konfigurieren</DialogTitle>
        <CloseButton type="button" aria-label="Schließen"><Cross s={8} c="#222" /></CloseButton>
      </DialogHead>
      <Fields $gap={2}>
        <Field>
          <label htmlFor="f-start">Startzeit:</label>
          <Control $focus><Entry id="f-start" ref={start} defaultValue="08:00:00" /><Spin /></Control>
        </Field>
        <Field>
          <label htmlFor="f-end">Endzeit:</label>
          <Control><Entry id="f-end" defaultValue="09:00:00" /><Spin /></Control>
        </Field>
        <Field>
          <label htmlFor="f-topic">Thema:</label>
          <Control><Entry id="f-topic" /></Control>
        </Field>
      </Fields>
      <Fields $gap={5}>
        <Field>
          <label htmlFor="f-place">Ort:</label>
          <Control><Entry id="f-place" /></Control>
        </Field>
        <Field>
          <label htmlFor="f-format">Uhrzeitformat:</label>
          <Control>
            <Choice id="f-format"><option>08:00</option></Choice>
            <DropMark><Svg w={7} h={4}><path d="M.5.5l3 3 3-3" stroke="#555" /></Svg></DropMark>
          </Control>
        </Field>
        <Field>
          <label htmlFor="f-date">Datum:</label>
          <Control>
            <Entry id="f-date" defaultValue="08.08.2016" />
            <DateButton type="button" aria-label="Kalender">
              <Svg w={9} h={9}><rect x=".5" y=".5" width="8" height="8" rx="1" fill="#ddd" stroke="#888" /><path d="M2 3.500h5M2 5.500h5M3.500 2v5M5.500 2v5" stroke="#bbb" /></Svg>
              <Down c="#333" />
            </DateButton>
          </Control>
        </Field>
      </Fields>
      <DialogFooter>
        <PushButton type="button" $w={18} $first aria-label="Hilfe">
          <svg width="12" height="12" viewBox="0 0 12 12"><circle cx="6" cy="6" r="5.500" fill="#3a6fae" stroke="#2f5f9c" /><path d="M4 4.500c0-2.500 4-2.500 4-.2 0 1.300-2 1.400-2 2.900M6 8.300v1.400" stroke="#fff" strokeWidth="1.400" fill="none" /></svg>
        </PushButton>
        <PushButton type="submit" $w={51} $default>OK</PushButton>
        <PushButton type="button" $w={60}>Abbrechen</PushButton>
      </DialogFooter>
    </Dialog>
  );
}

export default function App() {
  return (
    <Shell>
      <GlobalStyle />
      <TitleBar>
        <QuickAccess>
          <Svg w={13} h={13}><path d="M6.500 1.500h6v10h-6z" fill="#fff" stroke={brand} /><path d="M9 3.500h2v2H9zM9 8h2v2H9z" stroke={brand} /><path d="M0 1l8-1v13l-8-1z" fill={brand} /><path d="M2 4l2 5 2-5" stroke="#fff" strokeWidth="1.300" /></Svg>
          <QuickButton type="button" aria-label="Speichern">
            <Svg w={11} h={11}><path d="M.5.5h10v10H.5z" fill="#fff" stroke="#7b5aa0" /><path d="M2.500.5v4h6v-4M3 10V7h5v3" stroke="#7b5aa0" strokeWidth="1.300" /></Svg>
          </QuickButton>
          <QuickButton type="button" aria-label="Rückgängig">
            <Svg w={12} h={11}><path d="M1 4h6a3 3 0 0 1 1 6H7M4 .5L.8 4 4 7.500" stroke={steel} strokeWidth="1.700" /></Svg>
            <Down />
          </QuickButton>
          <QuickButton type="button" aria-label="Wiederholen">
            <Svg w={11} h={11}><path d="M7 1.500A4.200 4.200 0 1 0 9.500 5M6 .5h4v3.500" stroke="#b5b5b5" strokeWidth="1.500" /></Svg>
          </QuickButton>
          <QuickButton type="button" aria-label="Anpassen">
            <Svg w={5} h={6}><path d="M0 .5h5" stroke="#777" /><path d="M0 3h5L2.500 6z" fill="#777" /></Svg>
          </QuickButton>
        </QuickAccess>
        <WindowTitle>Zeichnung1 – Visio Professional</WindowTitle>
        <WindowControls>
          <WindowButton type="button">?</WindowButton>
          <WindowButton type="button" aria-label="Minimieren"><Svg w={7} h={3}><path d="M0 1.500h7" stroke="#999" /></Svg></WindowButton>
          <WindowButton type="button" aria-label="Wiederherstellen"><Svg w={8} h={8}><path d="M.5 2.500h5v5h-5zM2.500 2.500v-2h5v5h-2" stroke="#999" /></Svg></WindowButton>
          <WindowButton type="button" aria-label="Schließen"><Cross s={7} c="#999" /></WindowButton>
        </WindowControls>
      </TitleBar>

      <TabBar>
        <FileTab type="button">DATEI</FileTab>
        <Tab type="button" $active>START</Tab>
        {menus.map((m) => <Tab key={m} type="button">{m}</Tab>)}
        <AccountBar>
          <AccountName />
          <WindowButton type="button" aria-label="Dokument schließen"><Cross s={7} c="#555" w={1.6} /></WindowButton>
        </AccountBar>
      </TabBar>

      <Ribbon>
        <RibbonGroup w={142} title="Zwischenablage" gap={3}>
          <BigButton type="button" $w={36}><PasteIcon /><BigLabel><LabelLine>Einfügen</LabelLine><LabelLine><Down /></LabelLine></BigLabel></BigButton>
          <Stack>
            <Tool type="button"><CutIcon />Ausschneiden</Tool>
            <Tool type="button"><CopyIcon />Kopieren</Tool>
            <Tool type="button"><BrushIcon />Format übertragen</Tool>
          </Stack>
        </RibbonGroup>

        <RibbonGroup w={159} title="Schriftart" launcher pad={3}>
          <Rows>
            <Row>
              <Picker $w={80}><PickerField aria-label="Schriftart"><option>Calibri</option></PickerField><Down /></Picker>
              <Picker $w={39}><PickerField aria-label="Schriftgrad"><option>14pt.</option></PickerField><Down /></Picker>
              <Glyph type="button" $w={18} aria-label="Vergrößern"><Svg w={10} h={11}><path d="M.5 10.500L3.500 2.500l3 8M1.500 7.500h4" stroke="#666" strokeWidth="1.200" /><path d="M6 2.500L8 0l2 2.500z" fill={steel} /></Svg></Glyph>
              <Glyph type="button" $w={10} aria-label="Verkleinern"><Svg w={10} h={11}><path d="M.5 10.500L3.500 4l3 6.500M2 8h3" stroke="#666" strokeWidth="1.200" /><path d="M6 0h4L8 2.500z" fill={steel} /></Svg></Glyph>
            </Row>
            <Row>
              <Glyph type="button" $on $w={16}><b>F</b></Glyph>
              <Glyph type="button" $w={12}><b><i>K</i></b></Glyph>
              <Glyph type="button" $w={14}><b><u>U</u></b></Glyph>
              <Glyph type="button" $w={14}><s>abc</s></Glyph>
              <Glyph type="button" $w={22}>Aa<Down /></Glyph>
              <Rule />
              <Glyph type="button" $w={26} aria-label="Schriftfarbe">
                <Svg w={13} h={13}><path d="M3 9l3.500-8L10 9M4.500 6h4" stroke="#666" strokeWidth="1.500" /><path d="M1 9.500h11V13H1z" fill="#c8232c" /></Svg>
                <Down />
              </Glyph>
            </Row>
          </Rows>
        </RibbonGroup>

        <RibbonGroup w={112} title="Absatz" launcher pad={3}>
          <Rows>
            <Row>
              <Glyph type="button" aria-label="Oben"><LinesIcon rows={[[0, 0, 11], [1, 3, 9], [0, 6, 11]]} /></Glyph>
              <Glyph type="button" $on aria-label="Mitte"><LinesIcon rows={[[0, 2, 11], [1, 5, 9], [0, 8, 11]]} /></Glyph>
              <Glyph type="button" $w={14} aria-label="Unten"><LinesIcon rows={[[0, 4, 11], [1, 7, 9], [0, 10, 11]]} /></Glyph>
              <Rule />
              <Glyph type="button" aria-label="Aufzählung"><Svg w={11} h={11}><path d="M4 1.500h7M4 5.500h7M4 9.500h7" stroke="#808080" /><path d="M0 .5h2v2H0zM0 4.500h2v2H0zM0 8.500h2v2H0z" fill={steel} /></Svg></Glyph>
              <Rule />
              <Glyph type="button" aria-label="Drehen"><Svg w={12} h={12}><path d="M1 11.500L4.500 3 8 11.500M2.500 8.500h4" stroke="#666" strokeWidth="1.700" /><path d="M6 2.500c3-1 4 1 4 4M8 .5L6 2.500l2 2" stroke={steel} /></Svg></Glyph>
            </Row>
            <Row>
              <Glyph type="button" aria-label="Linksbündig"><LinesIcon rows={[[0, 1, 11], [0, 4, 7], [0, 7, 11], [0, 10, 7]]} /></Glyph>
              <Glyph type="button" $on aria-label="Zentriert"><LinesIcon rows={[[0, 1, 11], [2, 4, 7], [0, 7, 11], [2, 10, 7]]} /></Glyph>
              <Glyph type="button" $w={14} aria-label="Rechtsbündig"><LinesIcon rows={[[0, 1, 11], [4, 4, 7], [0, 7, 11], [4, 10, 7]]} /></Glyph>
              <Glyph type="button" $w={12} aria-label="Blocksatz"><LinesIcon rows={[[0, 1, 11], [0, 4, 11], [0, 7, 11], [0, 10, 11]]} /></Glyph>
              <Rule />
              <Glyph type="button" $w={14} aria-label="Einzug verkleinern"><IndentIcon out /></Glyph>
              <Glyph type="button" $w={13} aria-label="Einzug vergrößern"><IndentIcon /></Glyph>
            </Row>
          </Rows>
        </RibbonGroup>

        <RibbonGroup w={95} title="Tools" gap={2} pad={3}>
          <Stack>
            <Tool type="button" $on $w={62}><PointerIcon />Zeigertool</Tool>
            <Tool type="button"><ConnectorIcon />Verbinder</Tool>
            <Tool type="button"><Svg w={12} h={10}><path d="M3 9l3-8 3 8M4 6.500h4" stroke="#555" strokeWidth="1.300" /></Svg>Text</Tool>
          </Stack>
          <Stack>
            <Tool type="button" aria-label="Rechteck"><Svg w={13} h={10}><path d="M.5.5h12v9H.5z" fill="#fff" stroke="#888" /></Svg><ToolArrow><Down /></ToolArrow></Tool>
            <Tool type="button" $w={15} aria-label="Verbindungspunkt"><Svg w={13} h={8}><path d="M3 .5l7 7M10 .5l-7 7" stroke={steel} strokeWidth="1.800" /></Svg></Tool>
            <Tool type="button" aria-label="Textblock"><CropIcon /></Tool>
          </Stack>
        </RibbonGroup>

        <RibbonGroup w={125} title="Formenarten" launcher gap={2} pad={3}>
          <BigButton type="button" $w={62}><QuickStyleIcon /><BigLabel><LabelLine>Schnellformat-</LabelLine><LabelLine>vorlagen<Down /></LabelLine></BigLabel></BigButton>
          <Stack>
            <Tool type="button"><FillIcon />Füllen<ToolArrow><Down /></ToolArrow></Tool>
            <Tool type="button"><LineIcon />Linie<ToolArrow><Down /></ToolArrow></Tool>
            <Tool type="button"><EffectIcon />Effekte<ToolArrow><Down /></ToolArrow></Tool>
          </Stack>
        </RibbonGroup>

        <RibbonGroup w={216} title="Anordnen" gap={2} pad={2}>
          <BigButton type="button" $w={46}><AlignIcon /><BigLabel><LabelLine>Ausrichten</LabelLine><LabelLine><Down /></LabelLine></BigLabel></BigButton>
          <BigButton type="button" $w={54}><PositionIcon /><BigLabel><LabelLine>Positionieren</LabelLine><LabelLine><Down /></LabelLine></BigLabel></BigButton>
          <Stack>
            <Tool type="button" $muted $w={104}><FrontIcon />In den Vordergrund<ToolArrow><Down c="#bbb" /></ToolArrow></Tool>
            <Tool type="button" $muted $w={104}><BackIcon />In den Hintergrund<ToolArrow><Down c="#bbb" /></ToolArrow></Tool>
            <Tool type="button"><GroupIcon />Gruppieren<ToolArrow><Down /></ToolArrow></Tool>
          </Stack>
        </RibbonGroup>

        <RibbonGroup w={112} title="Bearbeiten" gap={3} pad={3}>
          <BigButton type="button" $w={36} $muted><ChangeShapeIcon /><BigLabel><LabelLine>Shape</LabelLine><LabelLine>ändern<Down c="#bbb" /></LabelLine></BigLabel></BigButton>
          <Stack>
            <Tool type="button"><FindIcon />Suchen<ToolArrow><Down /></ToolArrow></Tool>
            <Tool type="button"><LayerIcon />Layer<ToolArrow><Down /></ToolArrow></Tool>
            <Tool type="button"><PointerIcon />Markieren<ToolArrow><Down /></ToolArrow></Tool>
          </Stack>
        </RibbonGroup>
        <RibbonEnd><Svg w={7} h={5}><path d="M.5 4l3-3 3 3" stroke="#555" strokeWidth="1.400" /></Svg></RibbonEnd>
      </Ribbon>

      <Main>
        <Sidebar>
          <SidebarHead>
            <SidebarTitle>Shapes</SidebarTitle>
            <CloseButton type="button" aria-label="Bereich minimieren"><Svg w={5} h={7}><path d="M4 .5l-3 3 3 3" stroke="#444" strokeWidth="1.400" /></Svg></CloseButton>
          </SidebarHead>
          <SidebarTabs>
            <SidebarTab type="button" $on>SCHABLONEN</SidebarTab>
            <Rule />
            <SidebarTab type="button">SUCHEN</SidebarTab>
          </SidebarTabs>
          <Stencils>
            <Stencil type="button">Weitere Shapes <Side /></Stencil>
            <Stencil type="button">Quick-Shapes</Stencil>
            <Stencil type="button" $on>Kalender-Shapes</Stencil>
          </Stencils>
          <Divider />
          <ShapeList items={topShapes} />
          <Divider $inset />
          <ShapeList items={moreShapes} />
        </Sidebar>

        <Workspace>
          <Corner />
          <HRuler>
            {hTicks.map((n, i) => <HTick key={n} $last={i === 23}>{n}</HTick>)}
            <HMark $at={177} /><HMark $at={209} /><HMark $at={241} />
          </HRuler>
          <VScroll>
            <ScrollButton type="button" aria-label="Nach oben"><Up /></ScrollButton>
            <ScrollGap $grow={98} />
            <ScrollThumb $grow={182} />
            <ScrollGap $grow={91} />
            <ScrollButton type="button" aria-label="Nach unten"><Down /></ScrollButton>
          </VScroll>
          <VRuler>
            {vTicks.map((n, i) => <VTick key={n} $last={i === 11}><VTickLabel>{n}</VTickLabel></VTick>)}
            <VMark $at={151} /><VMark $at={157} /><VMark $at={163} />
          </VRuler>
          <Canvas>
            <Page>
              <Margins>
                <Calendar>
                  <CalendarTable>
                    <thead>
                      <tr><MonthCell colSpan={7}>August 16</MonthCell></tr>
                      <tr>{weekdays.map((d) => <WeekdayCell key={d}>{d}</WeekdayCell>)}</tr>
                    </thead>
                    <tbody>
                      {[0, 1, 2, 3, 4].map((w) => (
                        <tr key={w}>
                          {weekdays.map((d, c) => {
                            const n = w * 7 + c + 1;
                            return (
                              <DayCell key={d} $fill={dayFill(n, c)}>
                                <DayBand $fill={bandFill(n)}>{dayLabel(n)}</DayBand>
                              </DayCell>
                            );
                          })}
                        </tr>
                      ))}
                    </tbody>
                  </CalendarTable>
                  <Appointment>
                    8:00 - 9:00
                    <Handle $x="0" $y="50%" /><Handle $x="50%" $y="0" /><Handle $x="100%" $y="50%" /><Handle $x="50%" $y="100%" />
                  </Appointment>
                </Calendar>
              </Margins>
            </Page>
            <ConfigureDialog />
          </Canvas>
          <HScroll>
            <ScrollButton type="button" aria-label="Nach links"><Side left /></ScrollButton>
            <ScrollGap $grow={169} />
            <ScrollThumb $grow={442} />
            <ScrollGap $grow={175} />
            <ScrollButton type="button" aria-label="Nach rechts"><Side /></ScrollButton>
          </HScroll>
          <SheetTabs>
            <SheetTab type="button" $on>Zeichenblatt-1</SheetTab>
            <Rule />
            <SheetTab type="button">Alle<Up w={7} /></SheetTab>
            <Rule />
            <SheetTab type="button" aria-label="Neues Zeichenblatt"><Svg w={13} h={13}><circle cx="6.500" cy="6.500" r="5.500" stroke="#555" /><path d="M6.500 4v5M4 6.500h5" stroke="#333" strokeWidth="1.500" /></Svg></SheetTab>
          </SheetTabs>
        </Workspace>
      </Main>

      <StatusBar>
        <span>ZEICHENBL. 1 VON 1</span>
        <span>BREITE: 264,16 MM</span>
        <span>HÖHE: 185,42 MM</span>
        <span>WINKEL: 0 GRAD</span>
        <span>DEUTSCH (DEUTSCHLAND)</span>
        <Svg w={10} h={10}><path d="M.5 2.500h9v7h-9z" stroke="#fff" /><circle cx="2" cy="2" r="2" fill="#fff" /><path d="M2 5.500h6M2 7.500h6M4 1h5" stroke="#fff" strokeDasharray="1 1" /></Svg>
        <StatusTools>
          <StatusButton type="button" aria-label="Präsentation"><Svg w={10} h={10}><path d="M0 1h10M1.500 1v4.500h7V1M5 5.500V9M2.500 9.500h5M3 3.500h4" stroke="#fff" /></Svg></StatusButton>
          <Zoom>
            <StatusButton type="button" aria-label="Verkleinern"><Svg w={5} h={5}><path d="M0 2.500h5" stroke="#fff" strokeWidth="1.500" /></Svg></StatusButton>
            <ZoomSlider type="range" aria-label="Zoom" min={0} max={100} defaultValue={28} />
            <StatusButton type="button" aria-label="Vergrößern"><Svg w={6} h={6}><path d="M0 3h6M3 0v6" stroke="#fff" strokeWidth="1.500" /></Svg></StatusButton>
          </Zoom>
          <span>60 %</span>
          <StatusButton type="button" aria-label="Anpassen"><Svg w={10} h={10}><path d="M.5.5h9v9h-9z" stroke="#dfe4f3" /><path d="M2 4V2h2M6 2h2v2M8 6v2H6M4 8H2V6M4.500 5h1" stroke="#fff" /></Svg></StatusButton>
          <StatusButton type="button" aria-label="Fenster wechseln"><Svg w={11} h={10}><path d="M.5 2.500h4v3h-4zM5.500.5h5v4h-5zM1.500 6.500h4v3h-4zM6.500 5.500h3v3h-3z" stroke="#fff" /></Svg></StatusButton>
        </StatusTools>
      </StatusBar>
    </Shell>
  );
}
